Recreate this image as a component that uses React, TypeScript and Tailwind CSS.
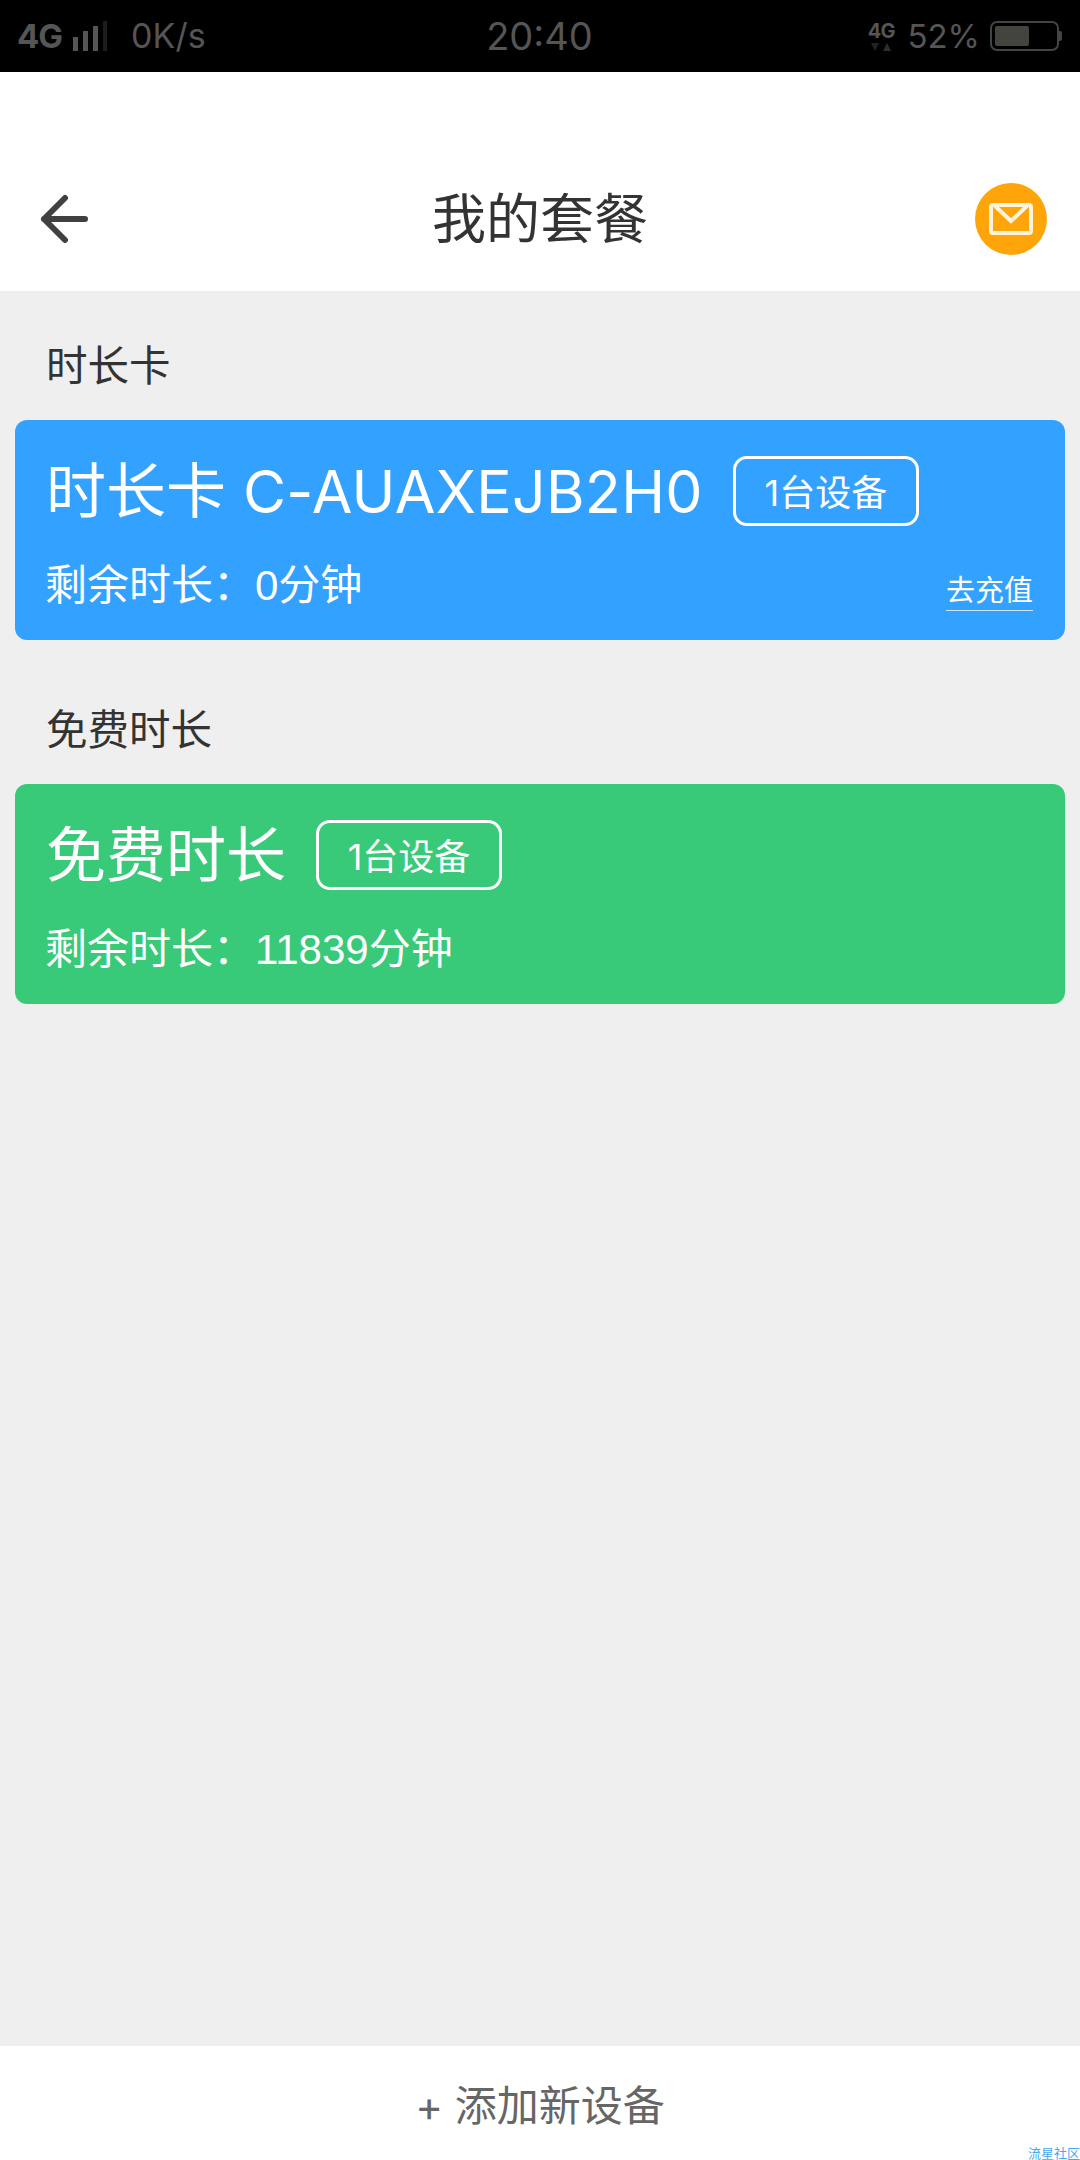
const FONT = "font-['Inter','Noto_Sans_CJK_SC',sans-serif]";

function StatusBar() {
  return (
    <div className="grid h-[72px] grid-cols-3 items-center bg-black pl-[17px] pr-[18px] text-[#555]">
      <div className="flex items-center">
        <span className="text-[33px] leading-none font-bold tracking-[-1px]">4G</span>
        <div className="ml-[11px] flex items-end gap-[5px]">
          <span className="h-[14px] w-[5px] bg-[#555]" />
          <span className="h-[20px] w-[5px] bg-[#555]" />
          <span className="h-[25px] w-[5px] bg-[#555]" />
          <span className="h-[30px] w-[4px] bg-[#1c1c1c]" />
        </div>
        <span className="ml-[24px] text-[34px] leading-none">0K/s</span>
      </div>
      <div className="text-center text-[38px] leading-none">20:40</div>
      <div className="flex items-center justify-end">
        <div className="flex flex-col items-center">
          <span className="text-[20px] leading-[20px] font-bold tracking-[-1px]">4G</span>
          <svg width="24" height="10" viewBox="0 0 24 10" className="mt-[1px]">
            <path d="M2 1h8l-4 8z" fill="#222" />
            <path d="M18 1l4 8h-8z" fill="#2e2e2e" />
          </svg>
        </div>
        <span className="ml-[13px] text-[33px] leading-none">52%</span>
        <div className="ml-[10px] flex items-center">
          <div className="h-[30px] w-[69px] rounded-[7px] border-2 border-[#444] p-[3px]">
            <div className="h-full w-[34px] rounded-[2px] bg-[#44443f]" />
          </div>
          <span className="h-[10px] w-[3px] rounded-r-[2px] bg-[#444]" />
        </div>
      </div>
    </div>
  );
}

function Header() {
  return (
    <div className="grid h-[219px] grid-cols-[1fr_auto_1fr] items-end bg-white px-[33px] pb-[36px]">
      <svg width="50" height="50" viewBox="0 0 50 50" fill="none" className="mb-[11px] ml-[7px]">
        <path
          d="M4 25h41M25 4 4 25l21 21"
          stroke="#404040"
          strokeWidth="6"
          strokeLinecap="round"
          strokeLinejoin="round"
        />
      </svg>
      <h1 className="mb-[6px] text-[54px] leading-[58px] font-normal text-[#333]">我的套餐</h1>
      <div className="flex h-[72px] w-[72px] items-center justify-center justify-self-end rounded-full bg-[#ffa50a]">
        <svg width="44" height="32" viewBox="0 0 44 32" fill="none">
          <rect x="2" y="2" width="40" height="28" rx="2" stroke="#fff3dc" strokeWidth="4" />
          <path d="M6 3 22 18 38 3" stroke="#fff3dc" strokeWidth="4" />
        </svg>
      </div>
    </div>
  );
}

function PlanCard({
  title,
  code,
  remaining,
  color,
  recharge,
}: {
  title: string;
  code?: string;
  remaining: string;
  color: string;
  recharge?: boolean;
}) {
  return (
    <div className={`mx-[15px] flex h-[220px] flex-col rounded-[12px] px-[32px] pt-[36px] text-white ${color}`}>
      <div className="flex h-[70px] items-center">
        <span className="ml-[-1px] text-[60px] leading-none whitespace-nowrap">
          {title}
          {code ? <span className="text-[59px] tracking-[0.3px]"> {code}</span> : null}
        </span>
        <span className="ml-[30px] flex h-[70px] w-[186px] items-center justify-center rounded-[14px] border-[3px] border-white pt-[3px] text-[36px] leading-none">
          1台设备
        </span>
      </div>
      <div className="mt-[35px] flex items-end justify-between">
        <span className="ml-[-2px] font-['Liberation_Sans','Noto_Sans_CJK_SC',sans-serif] text-[42px] leading-[50px]">
          剩余时长：{remaining}
        </span>
        {recharge ? (
          <span className="border-b border-[#cfe6ff] text-[29px] leading-[38px]">去充值</span>
        ) : null}
      </div>
    </div>
  );
}

export default function App() {
  return (
    <div className={`relative flex h-[2160px] w-[1080px] flex-col overflow-hidden bg-[#efefef] ${FONT}`}>
      <StatusBar />
      <Header />
      <main className="flex flex-1 flex-col">
        <h2 className="h-[129px] pl-[46px] pt-[50px] text-[41.5px] leading-[50px] font-normal text-[#333]">时长卡</h2>
        <PlanCard
          title="时长卡"
          code="C-AUAXEJB2H0"
          remaining="0分钟"
          color="bg-[#33a1ff]"
          recharge
        />
        <h2 className="h-[144px] pl-[46px] pt-[65px] text-[41.5px] leading-[50px] font-normal text-[#333]">免费时长</h2>
        <PlanCard title="免费时长" remaining="11839分钟" color="bg-[#38ca78]" />
      </main>
      <div className="flex h-[114px] items-center justify-center bg-white pt-[5px] text-[42px] text-[#666]">
        + 添加新设备
      </div>
      <span className="absolute right-0 bottom-0 text-[13px] leading-[13px] text-[#4aa8ee]">流星社区</span>
    </div>
  );
}
